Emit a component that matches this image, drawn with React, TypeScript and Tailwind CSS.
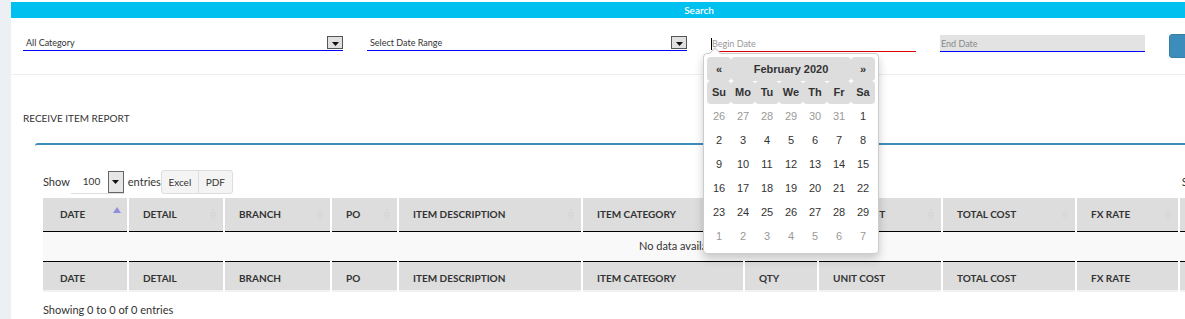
import React from 'react'

type Col = { label: string; w: string; sort?: 'asc' | 'both' }

const cols: Col[] = [
  { label: 'DATE', w: 'w-[85px]', sort: 'asc' },
  { label: 'DETAIL', w: 'w-[96px]', sort: 'both' },
  { label: 'BRANCH', w: 'w-[107px]', sort: 'both' },
  { label: 'PO', w: 'w-[67px]', sort: 'both' },
  { label: 'ITEM DESCRIPTION', w: 'w-[184px]', sort: 'both' },
  { label: 'ITEM CATEGORY', w: 'w-[162px]', sort: 'both' },
  { label: 'QTY', w: 'w-[74px]', sort: 'both' },
  { label: 'UNIT COST', w: 'w-[124px]', sort: 'both' },
  { label: 'TOTAL COST', w: 'w-[134px]', sort: 'both' },
  { label: 'FX RATE', w: 'w-[103px]', sort: 'both' },
  { label: 'REMARKS', w: 'w-[177px]', sort: 'both' },
]

const weeks: { d: number; old?: boolean }[][] = [
  [{ d: 26, old: true }, { d: 27, old: true }, { d: 28, old: true }, { d: 29, old: true }, { d: 30, old: true }, { d: 31, old: true }, { d: 1 }],
  [{ d: 2 }, { d: 3 }, { d: 4 }, { d: 5 }, { d: 6 }, { d: 7 }, { d: 8 }],
  [{ d: 9 }, { d: 10 }, { d: 11 }, { d: 12 }, { d: 13 }, { d: 14 }, { d: 15 }],
  [{ d: 16 }, { d: 17 }, { d: 18 }, { d: 19 }, { d: 20 }, { d: 21 }, { d: 22 }],
  [{ d: 23 }, { d: 24 }, { d: 25 }, { d: 26 }, { d: 27 }, { d: 28 }, { d: 29 }],
  [{ d: 1, old: true }, { d: 2, old: true }, { d: 3, old: true }, { d: 4, old: true }, { d: 5, old: true }, { d: 6, old: true }, { d: 7, old: true }],
]

function Caret() {
  return (
    <svg width="7" height="4" viewBox="0 0 7 4">
      <path d="M0 0h7L3.5 4z" fill="#111" />
    </svg>
  )
}

function SelectBox({ label }: { label: string }) {
  return (
    <div className="flex h-[16px] items-end justify-between border-b border-[#0000ff]">
      <span className="pl-[3px] text-[9px] leading-[14px] text-[#333]">{label}</span>
      <span className="mb-[1px] flex h-[13px] w-[16px] items-center justify-center border border-[#555] bg-[#e0e0e0] pt-[2px]">
        <Caret />
      </span>
    </div>
  )
}

function SortIcon({ kind }: { kind?: 'asc' | 'both' }) {
  if (kind === 'asc') {
    return (
      <svg width="8" height="6" viewBox="0 0 8 6" className="absolute right-[6px] top-[9px]">
        <path d="M0 6L4 0l4 6z" fill="#8f8fe0" />
      </svg>
    )
  }
  return (
    <svg width="6" height="11" viewBox="0 0 6 11" className="absolute right-[7px] top-[11px]">
      <path d="M0.5 4.5L3 0.8l2.5 3.7zM0.5 6.5L3 10.2l2.5-3.7z" fill="none" stroke="#d2d2d2" strokeWidth="0.7" />
    </svg>
  )
}

function Calendar() {
  const dow = ['Su', 'Mo', 'Tu', 'We', 'Th', 'Fr', 'Sa']
  return (
    <div className="absolute left-[692px] top-[53px] w-[176px] rounded-[4px] border border-[#ccc] bg-white px-[3px] pb-[5px] pt-[3px] font-['Liberation_Sans',Arial,sans-serif] text-[11px] text-[#333] shadow-[0_5px_10px_rgba(0,0,0,0.2)]">
      <div className="absolute -top-[5px] left-[7px] h-[8px] w-[8px] rotate-45 border-l border-t border-[#ccc] bg-white" />
      <table className="relative w-[168px] border-separate border-spacing-0 text-center">
        <thead>
          <tr className="h-[24px] font-bold">
            <th className="w-[24px] rounded-[4px] bg-[#dddddd]">«</th>
            <th colSpan={5} className="rounded-[4px] bg-[#dddddd]">February 2020</th>
            <th className="w-[24px] rounded-[4px] bg-[#dddddd]">»</th>
          </tr>
          <tr className="h-[23px] font-bold">
            {dow.map((d) => (
              <th key={d} className="w-[24px] rounded-[4px] bg-[#dddddd]">{d}</th>
            ))}
          </tr>
        </thead>
        <tbody>
          {weeks.map((w, i) => (
            <tr key={i} className="h-[24px]">
              {w.map((c, j) => (
                <td key={j} className={c.old ? 'text-[#999]' : 'text-[#333]'}>{c.d}</td>
              ))}
            </tr>
          ))}
        </tbody>
      </table>
    </div>
  )
}

export default function App() {
  return (
    <div className="flex h-[319px] w-[1185px] overflow-hidden bg-white font-['Lato',sans-serif] text-[#333]">
      <div className="w-[11px] shrink-0 bg-[#ecf0f5]" />
      <div className="relative w-[1376px] shrink-0 pt-[2px]">
        <div className="flex h-[16px] items-center justify-center bg-[#00c0ef] text-[10px] font-semibold text-white">
          Search
        </div>

        <div className="flex h-[56px] items-start pt-[17px]">
          <div className="w-[344px] px-3">
            <SelectBox label="All Category" />
          </div>
          <div className="w-[344px] px-3">
            <SelectBox label="Select Date Range" />
          </div>
          <div className="w-[229px] px-3">
            <div className="flex h-[17px] items-center border-b border-[#e00000] pt-[1px]">
              <span className="h-[12px] w-px bg-black" />
              <span className="text-[9px] text-[#999]">Begin Date</span>
            </div>
          </div>
          <div className="w-[229px] px-3">
            <div className="flex h-[17px] items-center border-b border-[#0000ff] bg-[#e3e3e3] pl-[1px] pt-[1px] text-[9px] text-[#888]">
              End Date
            </div>
          </div>
          <div className="w-[229px] px-3">
            <button className="-mt-[1px] h-[24px] w-[80px] rounded-[3px] border border-[#367fa9] bg-[#3c8dbc]" />
          </div>
        </div>

        <div className="h-px bg-[#eeeeee]" />

        <div className="mt-[36px] pl-3 text-[10px] leading-[14px] text-[#333]">RECEIVE ITEM REPORT</div>

        <div className="ml-[24px] mt-[18px] rounded-[3px] border-t-2 border-[#3c8dbc] px-2 pt-[25px]">
          <div className="flex h-[24px] w-[1313px] items-center justify-between text-[11px]">
            <div className="flex items-center">
              <span>Show</span>
              <span className="relative ml-[1px] flex h-[23px] w-[53px] items-center border-b border-[#ddd] pl-[12px] text-[10px]">
                100
                <span className="absolute right-0 top-0 flex h-[22px] w-[16px] items-center justify-center border border-[#666] bg-[#e6e6e6]">
                  <Caret />
                </span>
              </span>
              <span className="ml-[4px]">entries</span>
              <div className="flex h-[24px] items-center rounded-[3px] border border-[#ddd] bg-[#f4f4f4] text-[10px]">
                <span className="flex h-full w-[37px] items-center justify-center border-r border-[#ddd]">Excel</span>
                <span className="flex h-full w-[33px] items-center justify-center">PDF</span>
              </div>
            </div>
            <div className="flex items-center">
              <span>Search:</span>
              <span className="ml-[4px] h-[22px] w-[135px] border-b border-[#ddd]" />
            </div>
          </div>

          <table className="mt-[4px] w-[1313px] table-fixed border-collapse border-b-2 border-[#f2f2f2]">
            <colgroup>
              {cols.map((c) => (
                <col key={c.label} className={c.w} />
              ))}
            </colgroup>
            <thead>
              <tr>
                {cols.map((c, i) => (
                  <th
                    key={c.label}
                    className={`relative h-[33px] border-b border-r-2 border-b-black border-r-white bg-[#dddddd] pt-[1px] text-left text-[10px] font-bold text-[#333] ${i === 0 ? 'pl-[17px]' : 'pl-[14px]'}`}
                  >
                    {c.label}
                    <SortIcon kind={c.sort} />
                  </th>
                ))}
              </tr>
            </thead>
            <tbody>
              <tr>
                <td colSpan={cols.length} className="h-[30px] bg-[#f9f9f9] text-center text-[11px]">
                  No data available in table
                </td>
              </tr>
            </tbody>
            <tfoot>
              <tr>
                {cols.map((c, i) => (
                  <th
                    key={c.label}
                    className={`h-[30px] border-r-2 border-t border-r-white border-t-black bg-[#dddddd] pt-[6px] text-left text-[10px] font-bold text-[#333] ${i === 0 ? 'pl-[17px]' : 'pl-[14px]'}`}
                  >
                    {c.label}
                  </th>
                ))}
              </tr>
            </tfoot>
          </table>

          <div className="mt-[11px] text-[11px] leading-[14px]">Showing 0 to 0 of 0 entries</div>
        </div>

        <Calendar />
      </div>
    </div>
  )
}
